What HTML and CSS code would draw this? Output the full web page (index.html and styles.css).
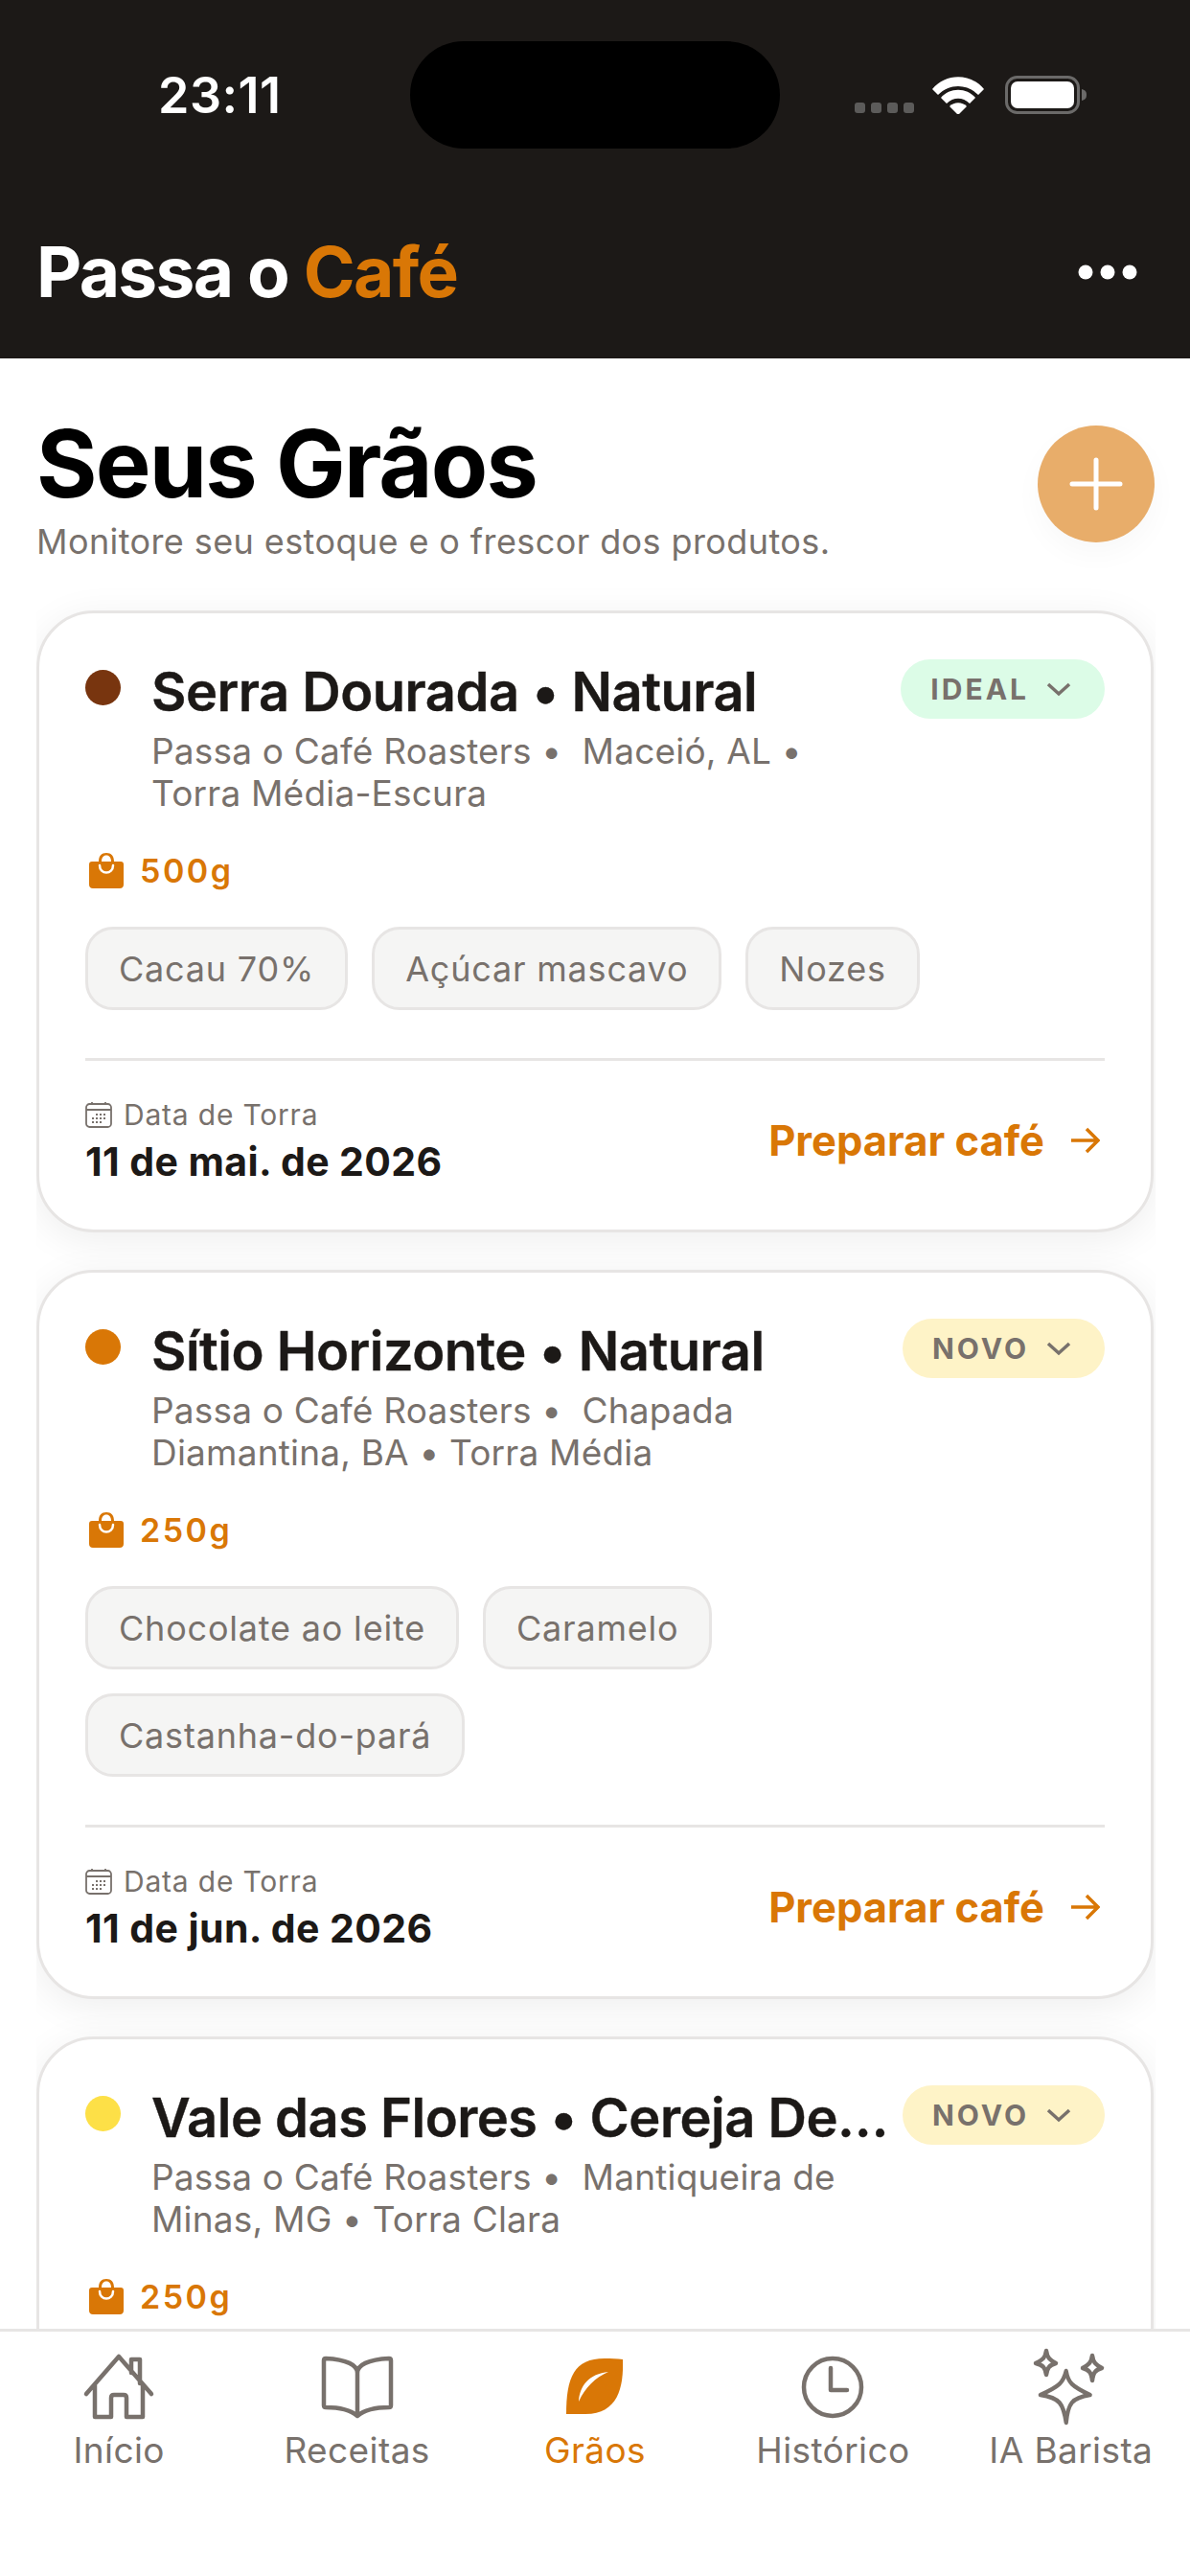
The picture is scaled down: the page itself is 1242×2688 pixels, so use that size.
FILE: index.html
```html
<!DOCTYPE html>
<html lang="pt-BR">

<head>
  <meta charset="UTF-8">
  <meta name="viewport" content="width=device-width, initial-scale=1.0">
  <title>Passa o Café - Seus Grãos</title>
  <link rel="stylesheet" href="styles.css">
</head>

<body>
  <div class="app">
    <header class="top">
      <div class="status-bar">
        <span class="clock">23:11</span>
        <span class="island"></span>
        <div class="status-icons">
          <span class="signal"><i></i><i></i><i></i><i></i></span>
          <svg class="wifi" viewBox="0 0 54 40" width="54" height="40">
            <path fill="#fff" d="M0 14 C14 -3 40 -3 54 14 L48 20 C36 8 18 8 6 20Z" />
            <path fill="#fff" d="M9 23 C18 12 36 12 45 23 L39 29 C32 22 22 22 15 29Z" />
            <path fill="#fff" d="M18 32 C23 27 31 27 36 32 L27 41Z" />
          </svg>
          <svg class="battery" viewBox="0 0 86 40" width="86" height="40">
            <rect x="1.5" y="1.5" width="75" height="37" rx="11" fill="none" stroke="#6b6a69" stroke-width="3" />
            <rect x="6" y="6" width="66" height="28" rx="7" fill="#fff" />
            <path fill="#6b6a69" d="M80 14 C84 15 85 17 85 20 C85 23 84 25 80 26Z" />
          </svg>
        </div>
      </div>
      <div class="brand-row">
        <div class="brand">Passa o <span class="accent">Café</span></div>
        <svg class="more" viewBox="0 0 62 16" width="62" height="16">
          <circle cx="8" cy="8" r="7.5" fill="#fff" />
          <circle cx="31" cy="8" r="7.5" fill="#fff" />
          <circle cx="54" cy="8" r="7.5" fill="#fff" />
        </svg>
      </div>
    </header>

    <main class="content">
      <div class="page-head">
        <div>
          <h1>Seus Grãos</h1>
          <p class="page-sub">Monitore seu estoque e o frescor dos produtos.</p>
        </div>
        <button class="add-btn" aria-label="Adicionar">
          <svg viewBox="0 0 56 56" width="56" height="56">
            <path d="M28 3V53M3 28H53" stroke="#fff" stroke-width="5" stroke-linecap="round" />
          </svg>
        </button>
      </div>

      <div class="card-list">
        <!-- card 1 -->
        <article class="card">
          <div class="card-head">
            <span class="dot dot-dark"></span>
            <div class="card-info">
              <h2>Serra Dourada • Natural</h2>
              <p class="meta">Passa o Café Roasters •&nbsp; Maceió, AL • Torra Média-Escura</p>
            </div>
            <span class="badge badge-ideal">IDEAL
              <svg viewBox="0 0 26 16" width="26" height="16"><path d="M2 3L13 13L24 3" /></svg>
            </span>
          </div>
          <div class="weight">
            <svg class="bag" viewBox="0 0 36 38" width="36" height="38">
              <path fill="#d97706" fill-rule="evenodd" d="M10 10 C10 4 13 1 18 1 C23 1 26 4 26 10 H33 C35 10 36 11 36 13 V34 C36 36.500 34.500 38 32 38 H4 C1.500 38 0 36.500 0 34 V13 C0 11 1 10 3 10Z M13 10 H23 C23 6 21 3.500 18 3.500 C15 3.500 13 6 13 10Z" />
              <path fill="none" stroke="#fff" stroke-width="2.500" stroke-linecap="round" d="M11 14 C11 24 25 24 25 14" />
            </svg>
            <span>500g</span>
          </div>
          <div class="chips">
            <span class="chip">Cacau 70%</span>
            <span class="chip">Açúcar mascavo</span>
            <span class="chip">Nozes</span>
          </div>
          <div class="card-foot">
            <div>
              <div class="roast-label">
                <svg class="cal" viewBox="0 0 28 28" width="28" height="28">
                  <rect x="1" y="3" width="26" height="24" rx="3.500" fill="none" stroke="#78716c" stroke-width="1.800" />
                  <path d="M1 9H27M7 1V4M21 1V4" stroke="#78716c" stroke-width="1.800" fill="none" />
                  <path d="M11 14h2M15 14h2M19 14h2M7 18h2M11 18h2M15 18h2M19 18h2M7 22h2M11 22h2M15 22h2" stroke="#78716c" stroke-width="2" fill="none" />
                </svg>
                Data de Torra
              </div>
              <div class="roast-date">11 de mai. de 2026</div>
            </div>
            <a class="brew" href="#">Preparar café
              <svg viewBox="0 0 32 28" width="32" height="28"><path d="M2 14H30M18 2L30 14L18 26" /></svg>
            </a>
          </div>
        </article>

        <!-- card 2 -->
        <article class="card">
          <div class="card-head">
            <span class="dot dot-mid"></span>
            <div class="card-info">
              <h2>Sítio Horizonte • Natural</h2>
              <p class="meta">Passa o Café Roasters •&nbsp; Chapada Diamantina, BA • Torra Média</p>
            </div>
            <span class="badge badge-new">NOVO
              <svg viewBox="0 0 26 16" width="26" height="16"><path d="M2 3L13 13L24 3" /></svg>
            </span>
          </div>
          <div class="weight">
            <svg class="bag" viewBox="0 0 36 38" width="36" height="38">
              <path fill="#d97706" fill-rule="evenodd" d="M10 10 C10 4 13 1 18 1 C23 1 26 4 26 10 H33 C35 10 36 11 36 13 V34 C36 36.500 34.500 38 32 38 H4 C1.500 38 0 36.500 0 34 V13 C0 11 1 10 3 10Z M13 10 H23 C23 6 21 3.500 18 3.500 C15 3.500 13 6 13 10Z" />
              <path fill="none" stroke="#fff" stroke-width="2.500" stroke-linecap="round" d="M11 14 C11 24 25 24 25 14" />
            </svg>
            <span>250g</span>
          </div>
          <div class="chips">
            <span class="chip">Chocolate ao leite</span>
            <span class="chip">Caramelo</span>
            <span class="chip">Castanha-do-pará</span>
          </div>
          <div class="card-foot">
            <div>
              <div class="roast-label">
                <svg class="cal" viewBox="0 0 28 28" width="28" height="28">
                  <rect x="1" y="3" width="26" height="24" rx="3.500" fill="none" stroke="#78716c" stroke-width="1.800" />
                  <path d="M1 9H27M7 1V4M21 1V4" stroke="#78716c" stroke-width="1.800" fill="none" />
                  <path d="M11 14h2M15 14h2M19 14h2M7 18h2M11 18h2M15 18h2M19 18h2M7 22h2M11 22h2M15 22h2" stroke="#78716c" stroke-width="2" fill="none" />
                </svg>
                Data de Torra
              </div>
              <div class="roast-date">11 de jun. de 2026</div>
            </div>
            <a class="brew" href="#">Preparar café
              <svg viewBox="0 0 32 28" width="32" height="28"><path d="M2 14H30M18 2L30 14L18 26" /></svg>
            </a>
          </div>
        </article>

        <!-- card 3, cut off by the tab bar -->
        <article class="card card-cut">
          <div class="card-head">
            <span class="dot dot-light"></span>
            <div class="card-info">
              <h2>Vale das Flores • Cereja Descascado</h2>
              <p class="meta">Passa o Café Roasters •&nbsp; Mantiqueira de Minas, MG • Torra Clara</p>
            </div>
            <span class="badge badge-new">NOVO
              <svg viewBox="0 0 26 16" width="26" height="16"><path d="M2 3L13 13L24 3" /></svg>
            </span>
          </div>
          <div class="weight">
            <svg class="bag" viewBox="0 0 36 38" width="36" height="38">
              <path fill="#d97706" fill-rule="evenodd" d="M10 10 C10 4 13 1 18 1 C23 1 26 4 26 10 H33 C35 10 36 11 36 13 V34 C36 36.500 34.500 38 32 38 H4 C1.500 38 0 36.500 0 34 V13 C0 11 1 10 3 10Z M13 10 H23 C23 6 21 3.500 18 3.500 C15 3.500 13 6 13 10Z" />
              <path fill="none" stroke="#fff" stroke-width="2.500" stroke-linecap="round" d="M11 14 C11 24 25 24 25 14" />
            </svg>
            <span>250g</span>
          </div>
        </article>
      </div>
    </main>

    <nav class="tabs">
      <a class="tab" href="#">
        <svg viewBox="0 0 72 70" width="72" height="70">
          <path d="M2 42L36 3L70 42M11 33V66H28V46C28 44 29 43 31 43H41C43 43 44 44 44 46V66H61V33M49 20V6H58V31" />
        </svg>
        <span>Início</span>
      </a>
      <a class="tab" href="#">
        <svg viewBox="0 0 74 66" width="74" height="66">
          <path d="M37 60V18C37 10 26 4 4 3C2.500 3 2 4 2 5V52C2 53 2.500 54 4 54C20 54 30 57 37 63C44 57 54 54 70 54C71.500 54 72 53 72 52V5C72 4 71.500 3 70 3C48 4 37 10 37 18" />
        </svg>
        <span>Receitas</span>
      </a>
      <a class="tab tab-active" href="#">
        <svg viewBox="0 0 60 60" width="60" height="60">
          <path fill="#d97706" d="M59 1C60 30 54 58 20 58C12 58 6 58 0 58C0 20 8 0 40 0C47 0 53 0 59 1Z" />
          <path fill="#fff" d="M13 45C14 28 24 16 44 14C30 20 20 30 13 45Z" />
        </svg>
        <span>Grãos</span>
      </a>
      <a class="tab" href="#">
        <svg viewBox="0 0 66 66" width="66" height="66">
          <circle cx="33" cy="33" r="30" />
          <path d="M31 13V36H48" />
        </svg>
        <span>Histórico</span>
      </a>
      <a class="tab" href="#">
        <svg viewBox="0 0 80 78" width="80" height="78">
          <path d="M32 22C34 34 38 38 58 47C38 50 34 56 32 76C29 56 25 50 4 47C25 38 29 34 32 22Z" transform="translate(4 0) scale(.96 1)" />
          <path d="M14 1C15 8 17 10 24 14C17 16 15 19 14 26C13 19 11 16 3 14C11 10 13 8 14 1Z" />
          <path d="M62 6C63 13 65 15 72 19C65 21 63 24 62 32C61 24 59 21 52 19C59 15 61 13 62 6Z" />
        </svg>
        <span>IA Barista</span>
      </a>
    </nav>
  </div>
</body>

</html>
```

FILE: styles.css
```css
* {
  box-sizing: border-box;
}

body {
  margin: 0;
  font-family: 'Inter', 'Liberation Sans', sans-serif;
  background-color: #fff;
  color: #1c1917;
}

h1, h2, p {
  margin: 0;
}

a {
  text-decoration: none;
}

.app {
  width: 1242px;
  height: 2688px;
  display: flex;
  flex-direction: column;
  overflow: hidden;
}

/* dark header */
.top {
  height: 374px;
  flex: none;
  background-color: #1c1917;
  color: #fff;
  padding-top: 43px;
}

.status-bar {
  height: 112px;
  padding: 0 107px 0 165px;
  display: flex;
  align-items: center;
}

.clock {
  width: 126px;
  flex: none;
  font-size: 52px;
  font-weight: 600;
  letter-spacing: .5px;
  white-space: nowrap;
}

.island {
  width: 386px;
  height: 112px;
  flex: none;
  border-radius: 56px;
  background-color: #000;
  margin-left: 137px;
}

.status-icons {
  margin-left: auto;
  display: flex;
  align-items: flex-end;
  gap: 22px;
  height: 40px;
}

.signal {
  display: flex;
  gap: 6px;
  padding-bottom: 1px;
  margin-right: -3px;
}

.signal i {
  width: 11px;
  height: 11px;
  border-radius: 3px;
  background-color: #5c5b5a;
}

.brand-row {
  margin-top: 87px;
  padding: 0 55px 0 38px;
  display: flex;
  align-items: center;
  justify-content: space-between;
}

.brand {
  font-size: 73px;
  font-weight: 700;
  letter-spacing: -1.700px;
  line-height: 84px;
}

.accent {
  color: #d97706;
}

/* page */
.content {
  flex: 1;
  min-height: 0;
  display: flex;
  flex-direction: column;
  overflow: hidden;
}

.page-head {
  height: 236px;
  flex: none;
  padding: 55px 37px 0 38px;
  display: flex;
  justify-content: space-between;
  align-items: flex-start;
}

h1 {
  font-size: 97px;
  font-weight: 700;
  letter-spacing: -1.8px;
  line-height: 110px;
  color: #000;
}

.page-sub {
  font-size: 36px;
  line-height: 46px;
  color: #78716c;
  letter-spacing: .4px;
  margin-top: 3px;
}

.add-btn {
  width: 122px;
  height: 122px;
  margin-top: 15px;
  border: none;
  border-radius: 50%;
  padding: 0;
  background-color: #e8ad6a;
  box-shadow: 0 12px 30px rgba(0, 0, 0, .03);
  display: flex;
  align-items: center;
  justify-content: center;
}

.card-list {
  flex: 1;
  min-height: 0;
  width: 1168px;
  margin-left: 38px;
  padding-top: 27px;
  display: flex;
  flex-direction: column;
  gap: 39px;
  overflow: hidden;
}

.card {
  width: 1166px;
  flex: none;
  background-color: #fff;
  border: 3px solid #e7e5e4;
  border-radius: 60px;
  padding: 48px 48px 0;
  box-shadow: 0 8px 40px rgba(0, 0, 0, .07);
}

.card-cut {
  height: 700px;
}

.card-head {
  display: flex;
  align-items: flex-start;
}

.dot {
  width: 37px;
  height: 37px;
  border-radius: 50%;
  flex: none;
  margin: 11px 32px 0 0;
}

.dot-dark {
  background-color: #78350f;
}

.dot-mid {
  background-color: #d97706;
}

.dot-light {
  background-color: #fde047;
}

.card-info {
  flex: 1;
  min-width: 0;
  padding-right: 14px;
}

h2 {
  font-size: 56px;
  font-weight: 600;
  line-height: 68px;
  white-space: nowrap;
  overflow: hidden;
  text-overflow: ellipsis;
  letter-spacing: -.5px;
  -webkit-text-stroke: .4px #1c1917;
}

.meta {
  margin-top: 6px;
  padding-right: 10px;
  font-size: 37px;
  line-height: 43.500px;
  color: #78716c;
  letter-spacing: .2px;
}

.badge {
  flex: none;
  height: 62px;
  padding: 0 35px 0 31px;
  border-radius: 31px;
  font-size: 30px;
  font-weight: 700;
  letter-spacing: 3px;
  color: #78716c;
  display: flex;
  align-items: center;
  gap: 18px;
}

.badge svg path {
  fill: none;
  stroke: #78716c;
  stroke-width: 3.500;
}

.badge-ideal {
  background-color: #dcfce7;
}

.badge-new {
  background-color: #fef3c7;
}

.weight {
  margin-top: 39px;
  display: flex;
  align-items: center;
  gap: 17px;
  padding-left: 4px;
  font-size: 34px;
  font-weight: 600;
  letter-spacing: 2.500px;
  color: #d97706;
  height: 40px;
}

.chips {
  margin-top: 39px;
  display: flex;
  flex-wrap: wrap;
  gap: 25px;
}

.chip {
  height: 87px;
  padding: 0 32px;
  border: 3px solid #e7e5e4;
  border-radius: 29px;
  background-color: #f5f5f4;
  font-size: 36px;
  letter-spacing: .8px;
  color: #78716c;
  display: flex;
  align-items: center;
}

.card-foot {
  margin-top: 50px;
  border-top: 3px solid #e7e5e4;
  padding: 38px 5px 47px 0;
  display: flex;
  justify-content: space-between;
  align-items: center;
}

.roast-label {
  display: flex;
  align-items: center;
  gap: 12px;
  font-size: 30px;
  line-height: 36px;
  letter-spacing: .8px;
  color: #78716c;
}

.roast-date {
  margin-top: 7px;
  font-size: 41px;
  line-height: 48px;
  font-weight: 700;
  letter-spacing: .4px;
}

.brew {
  display: flex;
  align-items: center;
  gap: 26px;
  margin-top: -2px;
  font-size: 43.500px;
  font-weight: 700;
  color: #d97706;
}

.brew svg path {
  fill: none;
  stroke: #d97706;
  stroke-width: 3.500;
}

/* tab bar */
.tabs {
  flex: none;
  height: 258px;
  border-top: 3px solid #e7e5e4;
  background-color: #fff;
  display: grid;
  grid-template-columns: repeat(5, 1fr);
}

.tab {
  display: flex;
  flex-direction: column;
  align-items: center;
  height: 150px;
  padding-top: 19px;
  color: #78716c;
  font-size: 37px;
  letter-spacing: .4px;
}

.tab svg {
  flex: none;
  height: 78px;
  overflow: visible;
}

.tab svg path,
.tab svg circle {
  fill: none;
  stroke: #78716c;
  stroke-width: 4.500;
  stroke-linecap: round;
  stroke-linejoin: round;
}

.tab-active {
  color: #d97706;
}

.tab-active svg path {
  stroke: none;
}

.tab-active svg path:first-child {
  fill: #d97706;
}

.tab-active svg path:last-child {
  fill: #fff;
}

.tab span {
  margin-top: 5px;
  line-height: 44px;
}
```
